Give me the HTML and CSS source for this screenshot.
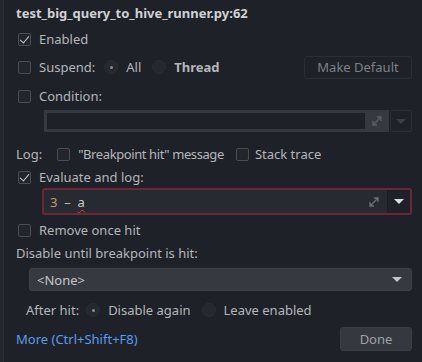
FILE: index.html
```html
<!DOCTYPE html>
<html lang="en">
<head>
    <meta charset="UTF-8">
    <title>Breakpoint</title>
    <link rel="stylesheet" href="styles.css">
</head>
<body>
    <div class="edge"></div>
    <div class="popup">
        <div class="title">test_big_query_to_hive_runner.py:62</div>

        <div class="row r-enabled">
            <span class="check on"></span><span>Enabled</span>
        </div>

        <div class="row r-suspend">
            <span class="check"></span><span>Suspend:</span>
            <span class="radio on"></span><span>All</span>
            <span class="radio"></span><span class="bold">Thread</span>
            <button class="btn make-default">Make Default</button>
        </div>

        <div class="row r-condition">
            <span class="check"></span><span>Condition:</span>
        </div>
        <div class="cond-field">
            <div class="cond-input"></div>
            <div class="cond-expand">
                <svg width="10" height="10" viewBox="0 0 10 10"><path d="M1 9 L9 1 M5 1 H9 V5 M1 5 V9 H5" stroke="#5b5e66" stroke-width="1.3" fill="none"/></svg>
            </div>
            <div class="cond-drop"><span class="arrow dim"></span></div>
        </div>

        <div class="row r-log">
            <span class="lbl">Log:</span>
            <span class="check"></span><span class="tight">"Breakpoint hit" message</span>
            <span class="check gap"></span><span>Stack trace</span>
        </div>

        <div class="row r-eval">
            <span class="check on"></span><span>Evaluate and log:</span>
        </div>
        <div class="eval-field">
            <div class="eval-input"><span class="num">3</span> &nbsp;–&nbsp; <span class="err">a</span></div>
            <svg class="expand" width="10" height="10" viewBox="0 0 10 10"><path d="M1 9 L9 1 M5 1 H9 V5 M1 5 V9 H5" stroke="#6b6e76" stroke-width="1.3" fill="none"/></svg>
            <div class="eval-drop"><span class="arrow"></span></div>
        </div>

        <div class="row r-remove">
            <span class="check"></span><span>Remove once hit</span>
        </div>

        <div class="row r-disable">Disable until breakpoint is hit:</div>

        <div class="combo">
            <span>&lt;None&gt;</span>
            <span class="arrow"></span>
        </div>

        <div class="row r-after">
            <span class="lbl">After hit:</span>
            <span class="radio on"></span><span>Disable again</span>
            <span class="radio"></span><span>Leave enabled</span>
        </div>

        <div class="footer">
            <span class="link">More (Ctrl+Shift+F8)</span>
            <button class="btn done">Done</button>
        </div>
    </div>
</body>
</html>
```

FILE: styles.css
```css
html, body {
    margin: 0;
    padding: 0;
    height: 100%;
}
body {
    display: flex;
    background-color: #1f2128;
    font-family: "Noto Sans", sans-serif;
    font-size: 13px;
    color: #b4b6ba;
    overflow: hidden;
}
.edge {
    width: 3px;
    background-color: #24262d;
    border-right: 1px solid #2e3038;
}
.popup {
    flex: 1;
    padding: 0 10px 0 12px;
}
.title {
    font-weight: bold;
    color: #cfd1d5;
    height: 26px;
    line-height: 26px;
}
.row {
    display: flex;
    align-items: center;
    height: 28px;
}
.r-enabled { height: 26px; }
.r-suspend { height: 30px; }
.r-condition { height: 28px; }
.bold {
    font-weight: bold;
}
.tight {
    letter-spacing: -0.4px;
}
.check {
    width: 11px;
    height: 11px;
    border: 1px solid #4a4d55;
    border-radius: 2px;
    background-color: #23252c;
    margin: 0 8px 0 2px;
    position: relative;
    flex: none;
}
.check.on::after {
    content: "";
    position: absolute;
    left: 3px;
    top: 0px;
    width: 4px;
    height: 8px;
    border: solid #c9cbcf;
    border-width: 0 1.6px 1.6px 0;
    transform: rotate(40deg);
}
.radio {
    width: 12px;
    height: 12px;
    border-radius: 50%;
    background-color: #262830;
    border: 1px solid #2b2d35;
    margin: 0 8px 0 0;
    position: relative;
    flex: none;
}
.r-suspend .radio {
    margin-left: 9px;
}
.r-suspend .radio + span + .radio {
    margin-left: 11px;
}
.radio.on::after {
    content: "";
    position: absolute;
    left: 4.5px;
    top: 4.5px;
    width: 3px;
    height: 3px;
    border-radius: 50%;
    background-color: #8a8c92;
}
.btn {
    font-family: inherit;
    font-size: 13px;
    color: #7d8086;
    background-color: #1f2128;
    border: 1px solid #2c2e36;
    border-radius: 3px;
    height: 23px;
    padding: 0;
}
.make-default {
    margin-left: auto;
    width: 108px;
}
.cond-field {
    display: flex;
    margin: 0 0 0 28px;
    height: 22px;
}
.cond-input {
    flex: 1;
    border: 3px solid #373941;
    border-right: none;
    background-color: #1f2128;
}
.cond-expand {
    width: 24px;
    background-color: #373941;
    display: flex;
    align-items: center;
    justify-content: center;
}
.cond-drop {
    width: 20px;
    margin-left: 1px;
    border: 1px solid #2c2e36;
    border-radius: 2px;
    display: flex;
    align-items: center;
    justify-content: center;
}
.r-log {
    margin-top: 9px;
    height: 26px;
}
.r-log .lbl {
    margin-right: 15px;
}
.r-log .check {
    margin-left: 0;
}
.r-log .check.gap {
    margin-left: 12px;
    margin-right: 6px;
}
.r-eval {
    height: 18px;
    margin-top: 1px;
}
.eval-field {
    display: flex;
    align-items: center;
    margin: 2px 0 0 26px;
    height: 23px;
    border: 2px solid #6a2836;
    border-radius: 3px;
    background-color: #272a31;
}
.eval-input {
    flex: 1;
    padding-left: 6px;
    color: #b4b6ba;
}
.num {
    color: #c49a6c;
}
.err {
    color: #c7c9cd;
    text-decoration: underline wavy #c0424f 1px;
    text-underline-offset: 2px;
}
.expand {
    margin-right: 8px;
}
.eval-drop {
    width: 22px;
    align-self: stretch;
    border-left: 1px solid #1b1d23;
    background-color: #1f2128;
    display: flex;
    align-items: center;
    justify-content: center;
}
.arrow {
    width: 0;
    height: 0;
    border-left: 5px solid transparent;
    border-right: 5px solid transparent;
    border-top: 5px solid #dcdee2;
}
.arrow.dim {
    border-top-color: #3c3e45;
}
.r-remove {
    margin-top: 1px;
}
.r-disable {
    height: 18px;
}
.combo {
    display: flex;
    align-items: center;
    justify-content: space-between;
    margin: 6px 0 0 13px;
    height: 21px;
    padding: 0 9px 0 7px;
    background-color: #373941;
    border: 1px solid #3f4149;
    border-radius: 3px;
    color: #c4c6ca;
}
.combo .arrow {
    border-top-color: #c4c6ca;
}
.r-after {
    height: 28px;
    margin-top: 5px;
    padding-left: 10px;
}
.r-after .lbl {
    margin-right: 7px;
}
.r-after .radio + span + .radio {
    margin-left: 11px;
}
.footer {
    display: flex;
    align-items: center;
    justify-content: space-between;
    margin-top: 3px;
}
.link {
    color: #5a9cf0;
}
.done {
    width: 72px;
    height: 24px;
    background-color: #363840;
    border-color: #3c3e46;
    color: #9fa1a6;
}
```
